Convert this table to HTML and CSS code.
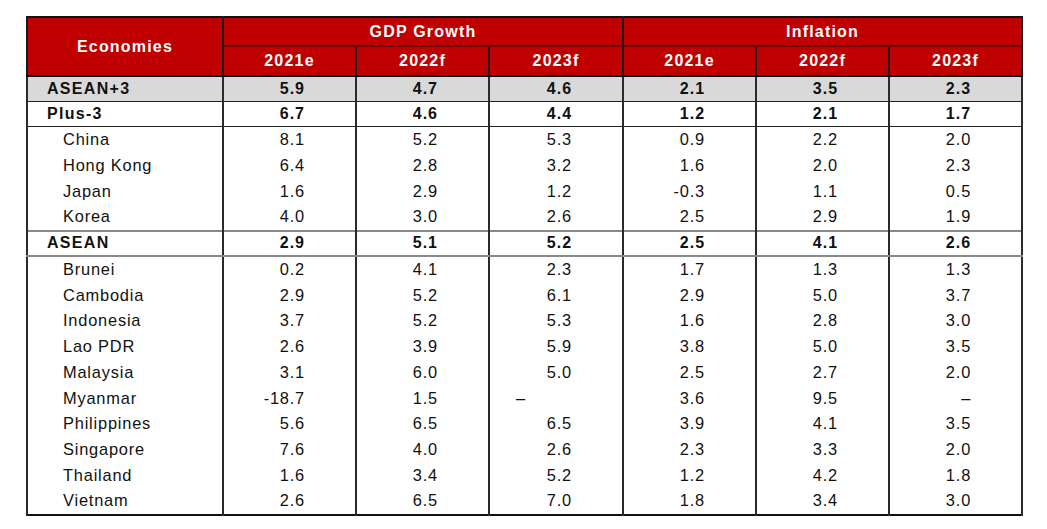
FILE: index.html
```html
<!DOCTYPE html>
<html lang="en">
<head>
<meta charset="utf-8">
<title>ASEAN+3 GDP Growth and Inflation</title>
<link rel="stylesheet" href="styles.css">
</head>
<body>
<table class="outlook">
  <colgroup>
    <col class="c-name">
    <col class="c-num"><col class="c-num"><col class="c-num-w">
    <col class="c-num"><col class="c-num"><col class="c-num">
  </colgroup>
  <thead>
    <tr class="h1">
      <th rowspan="2" class="econ">Economies</th>
      <th colspan="3" class="group">GDP Growth</th>
      <th colspan="3" class="group">Inflation</th>
    </tr>
    <tr class="h2">
      <th>2021e</th><th>2022f</th><th>2023f</th>
      <th>2021e</th><th>2022f</th><th>2023f</th>
    </tr>
  </thead>
  <tbody>
    <tr class="total">
      <td class="name">ASEAN+3</td><td>5.9</td><td>4.7</td><td>4.6</td><td>2.1</td><td>3.5</td><td>2.3</td>
    </tr>
    <tr class="agg">
      <td class="name">Plus-3</td><td>6.7</td><td>4.6</td><td>4.4</td><td>1.2</td><td>2.1</td><td>1.7</td>
    </tr>
    <tr class="eco"><td class="name">China</td><td>8.1</td><td>5.2</td><td>5.3</td><td>0.9</td><td>2.2</td><td>2.0</td></tr>
    <tr class="eco"><td class="name">Hong Kong</td><td>6.4</td><td>2.8</td><td>3.2</td><td>1.6</td><td>2.0</td><td>2.3</td></tr>
    <tr class="eco"><td class="name">Japan</td><td>1.6</td><td>2.9</td><td>1.2</td><td>-0.3</td><td>1.1</td><td>0.5</td></tr>
    <tr class="eco"><td class="name">Korea</td><td>4.0</td><td>3.0</td><td>2.6</td><td>2.5</td><td>2.9</td><td>1.9</td></tr>
    <tr class="agg sep">
      <td class="name">ASEAN</td><td>2.9</td><td>5.1</td><td>5.2</td><td>2.5</td><td>4.1</td><td>2.6</td>
    </tr>
    <tr class="eco"><td class="name">Brunei</td><td>0.2</td><td>4.1</td><td>2.3</td><td>1.7</td><td>1.3</td><td>1.3</td></tr>
    <tr class="eco"><td class="name">Cambodia</td><td>2.9</td><td>5.2</td><td>6.1</td><td>2.9</td><td>5.0</td><td>3.7</td></tr>
    <tr class="eco"><td class="name">Indonesia</td><td>3.7</td><td>5.2</td><td>5.3</td><td>1.6</td><td>2.8</td><td>3.0</td></tr>
    <tr class="eco"><td class="name">Lao PDR</td><td>2.6</td><td>3.9</td><td>5.9</td><td>3.8</td><td>5.0</td><td>3.5</td></tr>
    <tr class="eco"><td class="name">Malaysia</td><td>3.1</td><td>6.0</td><td>5.0</td><td>2.5</td><td>2.7</td><td>2.0</td></tr>
    <tr class="eco"><td class="name">Myanmar</td><td>-18.7</td><td>1.5</td><td class="na">–</td><td>3.6</td><td>9.5</td><td>–</td></tr>
    <tr class="eco"><td class="name">Philippines</td><td>5.6</td><td>6.5</td><td>6.5</td><td>3.9</td><td>4.1</td><td>3.5</td></tr>
    <tr class="eco"><td class="name">Singapore</td><td>7.6</td><td>4.0</td><td>2.6</td><td>2.3</td><td>3.3</td><td>2.0</td></tr>
    <tr class="eco"><td class="name">Thailand</td><td>1.6</td><td>3.4</td><td>5.2</td><td>1.2</td><td>4.2</td><td>1.8</td></tr>
    <tr class="eco"><td class="name">Vietnam</td><td>2.6</td><td>6.5</td><td>7.0</td><td>1.8</td><td>3.4</td><td>3.0</td></tr>
  </tbody>
</table>
</body>
</html>
```

FILE: styles.css
```css
html, body {
  margin: 0;
  padding: 0;
  background: #ffffff;
}

body {
  padding: 16px 0 0 26px;
  font-family: "Liberation Sans", Arial, sans-serif;
  color: #111111;
}

.outlook {
  border-collapse: collapse;
  table-layout: fixed;
  width: 995px;
  border: 2px solid #111111;
  font-size: 16.4px;
}

.c-name { width: 196px; }
.c-num { width: 133px; }
.c-num-w { width: 134px; }

.outlook th {
  background: #c00000;
  color: #ffffff;
  font-weight: bold;
  font-size: 16px;
  letter-spacing: 1.2px;
  text-align: center;
  vertical-align: middle;
  padding: 0;
  border-left: 2px solid #1a1a1a;
  border-right: 2px solid #1a1a1a;
}

.h1 th { height: 27px; }
.h1 .group { border-bottom: 2px solid #6e0000; }
.h2 th { height: 28px; border-bottom: 2px solid #000000; }
.econ { letter-spacing: 1.6px; border-bottom: 2px solid #000000; }

.outlook td {
  padding: 0 50px 0 0;
  text-align: right;
  vertical-align: middle;
  letter-spacing: 0.8px;
  border-left: 2px solid #2a2a2a;
  border-right: 2px solid #2a2a2a;
  white-space: nowrap;
}

.outlook td.name {
  text-align: left;
  padding: 0 0 0 35px;
}

.total td, .agg td {
  font-weight: bold;
  font-size: 16px;
  letter-spacing: 1px;
  height: 24px;
}

.total td.name, .agg td.name {
  padding-left: 19px;
  letter-spacing: 1.3px;
}

.total td {
  background: #d9d9d9;
  border-bottom: 1px solid #222222;
}

.agg td {
  border-bottom: 1px solid #222222;
}

.sep td {
  border-top: 2px solid #8a8a8a;
  border-bottom: 2px solid #8a8a8a;
  height: 23px;
}

.eco td {
  height: 25.7px;
}

.outlook td.na {
  padding-right: 96px;
}
```
